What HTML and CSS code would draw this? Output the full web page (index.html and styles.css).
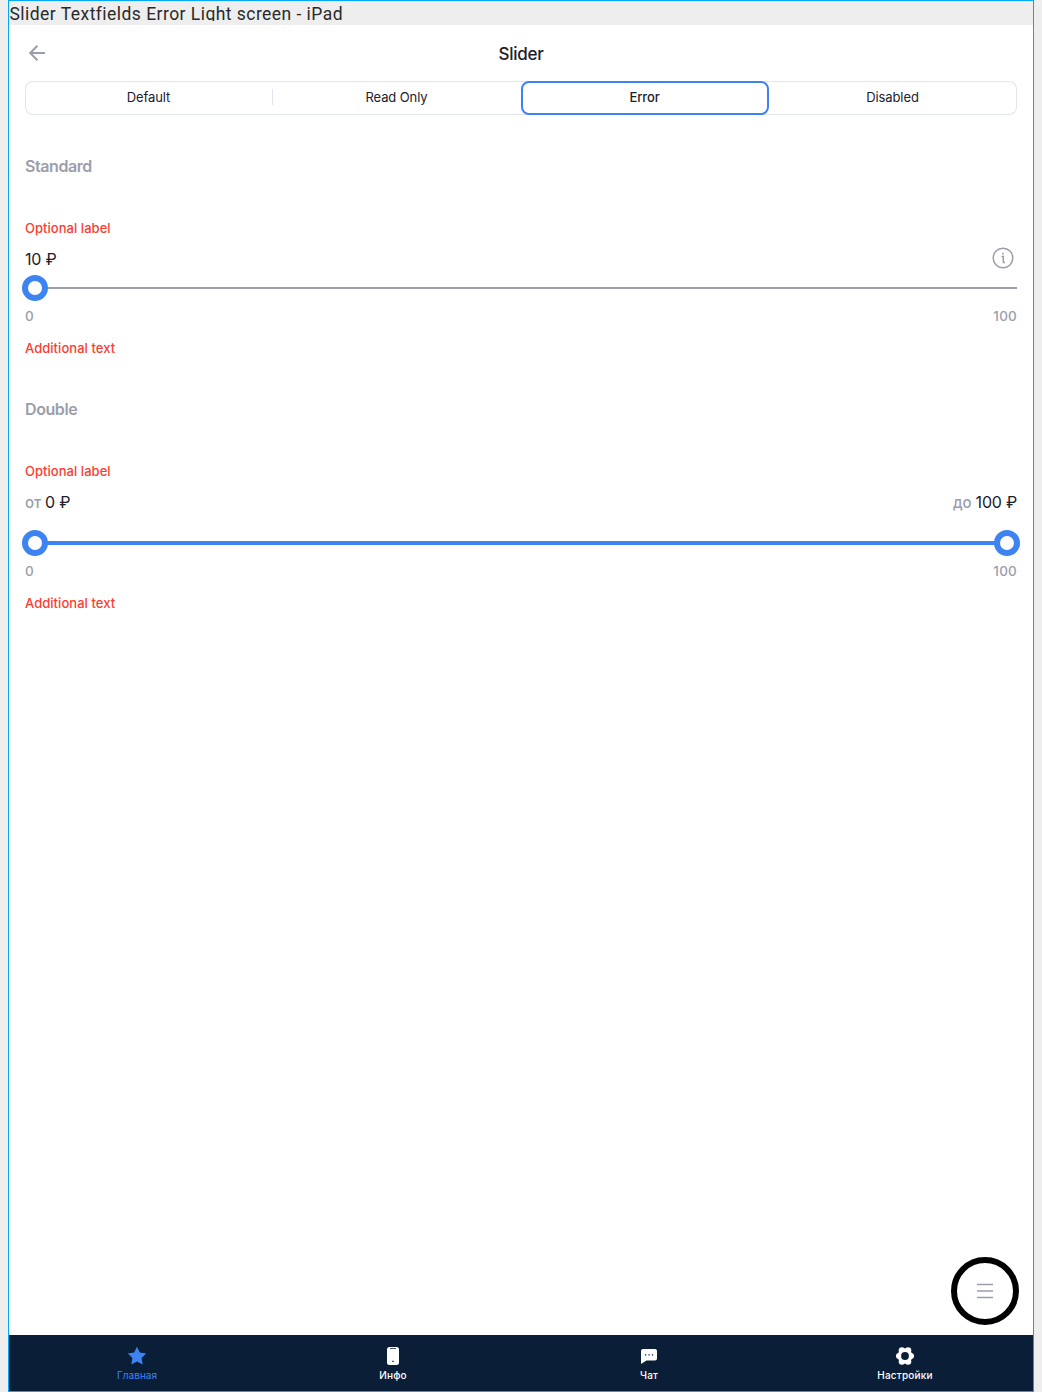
FILE: index.html
```html
<!DOCTYPE html>
<html lang="ru">
<head>
<meta charset="utf-8">
<title>Slider Textfields Error Light screen - iPad</title>
<link rel="stylesheet" href="styles.css">
</head>
<body>
<main class="frame">
  <div class="caption"><span class="caption-text">Slider Textfields Error Light screen - iPad</span></div>
  <div class="screen">
    <header class="header">
      <svg class="back" width="24" height="24" viewBox="0 0 24 24"><path d="M20 12H5M12.4 4.8L5.2 12L12.4 19.2"/></svg>
      <h1 class="title">Slider</h1>
    </header>
    <div class="tabs">
      <div class="tab divided"><span>Default</span></div>
      <div class="tab"><span>Read Only</span></div>
      <div class="tab active"><span>Error</span></div>
      <div class="tab"><span>Disabled</span></div>
    </div>
    <section class="group">
      <h2 class="heading">Standard</h2>
      <div class="label">Optional label</div>
      <div class="values">
        <span class="value">10 ₽</span>
        <svg class="info" width="24" height="24" viewBox="0 0 24 24"><circle cx="12" cy="12" r="9.8"/><path d="M10.5 10.5H12.3V15.7Q12.3 16.5 13 16.5H14"/><path d="M11.9 6.8V8.4"/></svg>
      </div>
      <div class="slider"><i class="thumb"></i><i class="track"></i></div>
      <div class="range"><span>0</span><span>100</span></div>
      <div class="hint">Additional text</div>
    </section>
    <section class="group double">
      <h2 class="heading">Double</h2>
      <div class="label">Optional label</div>
      <div class="values">
        <span class="pair"><span class="prefix">от</span><span class="value">0 ₽</span></span>
        <span class="pair"><span class="prefix">до</span><span class="value">100 ₽</span></span>
      </div>
      <div class="slider"><i class="thumb"></i><i class="track"></i><i class="thumb"></i></div>
      <div class="range"><span>0</span><span>100</span></div>
      <div class="hint">Additional text</div>
    </section>
    <div class="fab"><svg width="16" height="16" viewBox="0 0 16 16"><path d="M0 1.5H16M0 8H16M0 14.5H16"/></svg></div>
    <nav class="nav">
      <div class="item selected"><svg width="20" height="20" viewBox="0 0 20 20"><path d="M10 .8l2.8 5.8 6.4.9-4.6 4.5 1.1 6.4L10 15.4l-5.7 3 1.1-6.4L.8 7.5l6.4-.9z"/></svg><span>Главная</span></div>
      <div class="item"><svg width="20" height="20" viewBox="0 0 20 20"><rect x="4" y="1" width="12" height="18" rx="2.5"/><path class="cut" d="M7 2.2h6v.9H7zM9.3 14.7h1.4v1.4H9.3z"/></svg><span>Инфо</span></div>
      <div class="item"><svg width="20" height="20" viewBox="0 0 20 20"><path d="M4 3h12q2 0 2 2v7.5q0 2-2 2H7.5L2 18V5q0-2 2-2z"/><path class="cut" d="M5.9 8.2h1.3v1.3H5.9zM9.4 8.2h1.3v1.3H9.4zM12.8 8.2h1.3v1.3h-1.3z"/></svg><span>Чат</span></div>
      <div class="item"><svg width="20" height="20" viewBox="0 0 20 20"><circle cx="10" cy="10" r="7.4"/><circle cx="16" cy="10" r="3"/><circle cx="4" cy="10" r="3"/><circle cx="13.1" cy="4.4" r="3.2"/><circle cx="6.9" cy="4.4" r="3.2"/><circle cx="13.1" cy="15.6" r="3.2"/><circle cx="6.9" cy="15.6" r="3.2"/><circle class="cut" cx="10" cy="10" r="3.9"/></svg><span>Настройки</span></div>
    </nav>
  </div>
</main>
</body>
</html>
```
FILE: styles.css
```css
* { box-sizing: border-box; }
body {
  margin: 0;
  background: #eee;
  font-family: Inter, "Liberation Sans", sans-serif;
  color: #1c202b;
}
h1, h2 { margin: 0; }
span { white-space: nowrap; }
svg { display: block; flex: none; }
.frame {
  width: 1026px;
  height: 1392px;
  margin: 0 8px;
  border: 1px solid #00a8f5;
}
.caption { height: 24px; }
.caption-text {
  display: block;
  height: 20px;
  padding-left: .5px;
  overflow: hidden;
  font: 17.5px/26px Roboto, sans-serif;
  letter-spacing: .46px;
  color: #2a2a2a;
}
.screen {
  position: relative;
  height: 1366px;
  padding: 0 16px;
  background: #fff;
  display: flex;
  flex-direction: column;
}
.header {
  height: 56px;
  display: grid;
  grid-template-columns: 24px 1fr 24px;
  align-items: center;
}
.back { fill: none; stroke: #9a9eac; stroke-width: 2; }
.title { padding-top: 2px; text-align: center; font-size: 17px; font-weight: 500; letter-spacing: -.25px; }
.tabs {
  height: 34px;
  display: grid;
  grid-template-columns: repeat(4, 1fr);
  border-radius: 8px;
  box-shadow: inset 0 0 0 1px #e3e5ed;
}
.tab {
  padding-right: 1px;
  display: flex;
  justify-content: center;
  font-size: 13px;
  line-height: 33px;
  letter-spacing: -.1px;
}
.divided {
  background: linear-gradient(#e3e5ed, #e3e5ed) right 8px / 1px 16px no-repeat;
}
.active {
  border: 2px solid #3d84f2;
  border-radius: 8px;
  line-height: 29px;
  font-weight: 500;
}
.group { padding-top: 41px; display: flex; flex-direction: column; }
.heading { font-size: 16px; line-height: 20px; font-weight: 600; letter-spacing: -.42px; color: #9a9eac; }
.label, .hint { font-size: 13px; line-height: 20px; font-weight: 500; letter-spacing: .04px; color: #fa3c32; }
.label { margin-top: 42px; }
.values {
  height: 20px;
  margin-top: 11px;
  display: flex;
  align-items: center;
  justify-content: space-between;
}
.value { font-size: 16px; line-height: 20px; letter-spacing: -.2px; }
.pair { display: flex; align-items: baseline; gap: 4px; }
.prefix { font-size: 15px; line-height: 20px; font-weight: 500; letter-spacing: -.1px; color: #9a9eac; }
.info { margin: -2px 2px 0 0; fill: none; stroke: #9a9eac; stroke-width: 1.5; }
.slider { height: 26px; margin: 6px -3px 0; display: flex; align-items: center; }
.thumb { width: 26px; height: 26px; border: 6px solid #3d84f2; border-radius: 50%; }
.track { flex: 1; height: 2px; margin-right: 3px; background: #9a9eac; }
.range {
  margin-top: 5px;
  display: flex;
  justify-content: space-between;
  font-size: 13.5px;
  line-height: 20px;
  font-weight: 500;
  letter-spacing: .2px;
  color: #9a9eac;
}
.hint { margin-top: 12px; }
.double .slider { margin-top: 18px; }
.double .track { height: 4px; margin: 0 -1px; background: #3d84f2; }
.fab {
  position: absolute;
  right: 14px;
  bottom: 66px;
  width: 68px;
  height: 68px;
  border: 6px solid #000;
  border-radius: 50%;
  background: #fff;
  display: flex;
  align-items: center;
  justify-content: center;
}
.fab svg { stroke: #9a9eac; stroke-width: 1.5; }
.nav {
  height: 56px;
  margin: auto -16px 0;
  background: #0b1e38;
  display: grid;
  grid-template-columns: repeat(4, 1fr);
}
.item {
  padding-top: 11px;
  display: flex;
  flex-direction: column;
  align-items: center;
  gap: 3px;
  font-size: 10px;
  line-height: 13px;
  font-weight: 500;
  letter-spacing: .2px;
  color: #fff;
  fill: #fff;
}
.selected { color: #3d84f2; fill: #3d84f2; font-weight: 400; letter-spacing: .05px; }
.cut { fill: #0b1e38; }
```
